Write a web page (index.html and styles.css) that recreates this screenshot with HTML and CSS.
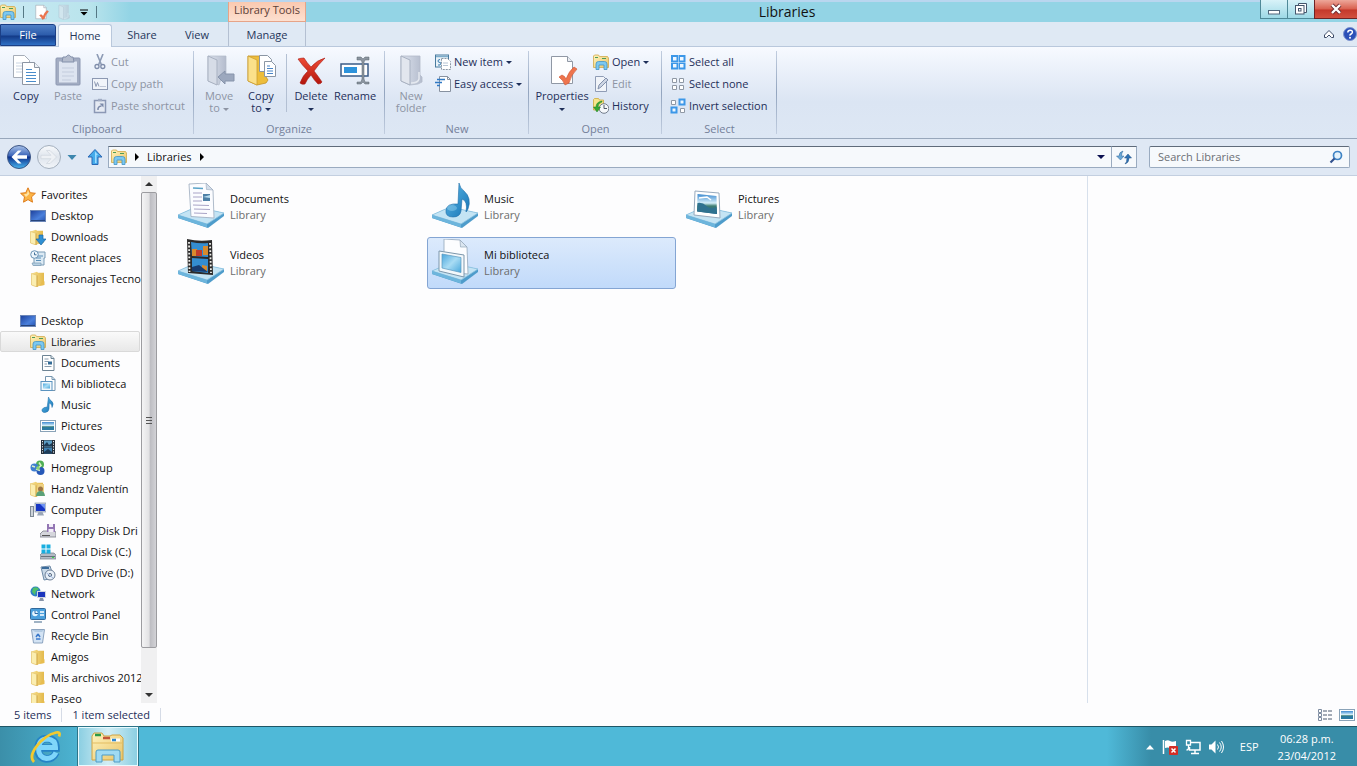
FILE: index.html
```html
<!DOCTYPE html>
<html lang="en">
<head>
<meta charset="utf-8">
<title>Libraries</title>
<link rel="stylesheet" href="styles.css">
</head>
<body>
<svg class="sprite" aria-hidden="true">
  <defs>
    <linearGradient id="gold" x1="0" y1="0" x2="1" y2="0"><stop offset="0" stop-color="#f7e08e"/><stop offset="1" stop-color="#e3b94c"/></linearGradient>
    <linearGradient id="cream" x1="0" y1="0" x2="1" y2="1"><stop offset="0" stop-color="#fff3bd"/><stop offset="1" stop-color="#e9c468"/></linearGradient>
    <linearGradient id="grey" x1="0" y1="0" x2="1" y2="0"><stop offset="0" stop-color="#dde3ee"/><stop offset="1" stop-color="#b4bccd"/></linearGradient>
    <linearGradient id="sky" x1="0" y1="0" x2="1" y2="1"><stop offset="0" stop-color="#4aa6dc"/><stop offset=".5" stop-color="#a9dcf4"/><stop offset="1" stop-color="#4aa8dc"/></linearGradient>
    <linearGradient id="screen" x1="0" y1="0" x2="1" y2="1"><stop offset="0" stop-color="#1c3f9a"/><stop offset=".6" stop-color="#4a80dc"/><stop offset="1" stop-color="#2450ae"/></linearGradient>
    <linearGradient id="note" x1="0" y1="0" x2="1" y2="1"><stop offset="0" stop-color="#5fbbe8"/><stop offset="1" stop-color="#1673b5"/></linearGradient>
    <linearGradient id="orb" x1="0" y1="0" x2="0" y2="1"><stop offset="0" stop-color="#a9c3ea"/><stop offset=".45" stop-color="#3a63b8"/><stop offset=".5" stop-color="#0c2f8c"/><stop offset="1" stop-color="#49b7f0"/></linearGradient>
    <linearGradient id="orboff" x1="0" y1="0" x2="0" y2="1"><stop offset="0" stop-color="#f8fafc"/><stop offset=".5" stop-color="#dfe5ed"/><stop offset="1" stop-color="#f2f5f9"/></linearGradient>
    <linearGradient id="scene" x1="0" y1="0" x2="0" y2="1"><stop offset="0" stop-color="#3d8ad0"/><stop offset=".45" stop-color="#d5effa"/><stop offset=".6" stop-color="#3f7f74"/><stop offset="1" stop-color="#1f5c8c"/></linearGradient>
    <linearGradient id="red" x1="0" y1="0" x2="0" y2="1"><stop offset="0" stop-color="#ee4b35"/><stop offset="1" stop-color="#b3150d"/></linearGradient>

    <symbol id="folder" viewBox="0 0 16 16"><path d="M1.500 2.500L7 .8l1 1h6V14l-5 1-2 1-5.500-2z" fill="url(#gold)"/><path d="M1.500 2.500L7 4.300V16l-5.500-2z" fill="#fbeeb0" stroke="#e0c069" stroke-width=".6"/><path d="M7 4.500V16" stroke="#c79a35" stroke-width=".7"/><path d="M13 9.500l1.500 1v3.500l-5 .8" fill="#e8bd50"/></symbol>
    <symbol id="download" viewBox="0 0 16 16"><use href="#folder" x="-1"/><path d="M9 6h4v4h3l-5 6-5-6h3z" fill="#2f8fd3" stroke="#1b67a6" stroke-width=".7"/></symbol>
    <symbol id="libs" viewBox="0 0 16 16"><path d="M.5 2l1-1h4l1 1.500h8L15.500 4v9.500H.5z" fill="url(#cream)" stroke="#d1a94a" stroke-width=".8"/><path d="M2 3.500h3M9 4.500h4" stroke="#4c9c57"/><path d="M3 15.500V10q0-2.500 2.500-2.500h6Q14 7.500 14 10v5.500h-3V11H6v4.500z" fill="#7cc8f0" stroke="#4394c6" stroke-width=".8"/></symbol>
    <symbol id="star" viewBox="0 0 16 16"><path d="M8 .8l2.200 4.900 5.200.6-3.900 3.600 1 5.300L8 12.600l-4.500 2.600 1-5.300L.6 6.300l5.200-.6z" fill="#fbb445" stroke="#de7c1c"/><path d="M8 3l1.300 4L6 10 4 7.200l3-.5z" fill="#fff0c0" opacity=".8"/></symbol>
    <symbol id="desk" viewBox="0 0 16 16"><rect x=".5" y="2.500" width="15" height="11" fill="url(#screen)" stroke="#6b86b8"/><path d="M1 12.500h14" stroke="#26447c"/></symbol>
    <symbol id="recent" viewBox="0 0 16 16"><path d="M4 2h11v6h-1v7H4z" fill="#dceaf4" stroke="#7a9bb5"/><path d="M6 8h5M6 10.500h5M8 6h5" stroke="#5a8fb8"/><path d="M2 13h9v2.500H3z" fill="#b7d0e2" stroke="#7a9bb5" stroke-width=".7"/><circle cx="4.500" cy="4.500" r="3.800" fill="#eef6fc" stroke="#6a93b5"/><path d="M4.500 2.500v2.300H6.500" fill="none" stroke="#3e6d94"/></symbol>
    <symbol id="doc" viewBox="0 0 16 16"><path d="M2.500.5H11l3 3v12H2.500z" fill="#fff" stroke="#6e8494"/><path d="M11 .5v3h3" fill="#dbe4ec" stroke="#6e8494"/><path d="M4.500 4h4M4.500 6.500h4M4.500 9h2.500M4.500 11.500h7" stroke="#8a9dae"/><rect x="8" y="6.500" width="4" height="3" fill="#336b96"/></symbol>
    <symbol id="mylib" viewBox="0 0 16 16"><path d="M5.500.5H12l3 3v11H5.500z" fill="#fff" stroke="#7595af"/><path d="M12 .5v3h3" fill="none" stroke="#7595af"/><rect x="1" y="5.500" width="11" height="9" fill="#f2f8fc" stroke="#5b93bf"/><rect x="3" y="7.500" width="7" height="5" fill="url(#sky)"/></symbol>
    <symbol id="music" viewBox="0 0 16 16"><path d="M8.500 0q.5 2.500 3 4 3 2.500.5 6.500.3-3.500-2.800-4.500l-.2 6q-.3 3-3.800 3.500-3.700 0-3.200-2.800Q3 10 7.200 10z" fill="url(#note)" stroke="#1c6ca8" stroke-width=".5"/></symbol>
    <symbol id="pic" viewBox="0 0 16 16"><rect x=".5" y="2.500" width="15" height="11" fill="#fff" stroke="#8aa3b8"/><rect x="2" y="4" width="12" height="8" fill="url(#scene)"/><path d="M2 10q3-1.500 6-1t6-.5V12H2z" fill="#2b7ba2"/></symbol>
    <symbol id="video" viewBox="0 0 16 16"><rect x="1" y="1" width="14" height="14" fill="#26303c"/><rect x="4" y="1.500" width="8" height="6" fill="#5d9dc4"/><rect x="4" y="8.500" width="8" height="6" fill="#3d7fb0"/><path d="M4 6l3-3 2 3 3-2v3H4zM4 13l4-3 4 3v1.500H4z" fill="#1d3b57"/><path d="M2.500 2v12M13.500 2v12" stroke="#e5edf3" stroke-dasharray="1.200 1.400"/></symbol>
    <symbol id="home" viewBox="0 0 16 16"><circle cx="10" cy="4.500" r="4" fill="#4fae55"/><circle cx="4.500" cy="7.500" r="4" fill="#3f7ed0"/><circle cx="10.500" cy="11" r="4" fill="#2658b8"/><path d="M9 2.500l2 3-4 4 3 1M2 6l3 1" stroke="#d8f0c8" stroke-width="1.500" fill="none"/><circle cx="8" cy="8" r="1.800" fill="#8cd472"/></symbol>
    <symbol id="user" viewBox="0 0 16 16"><use href="#folder" x="-1"/><path d="M8 3h6v12H7V8z" fill="#efd182"/><circle cx="10.500" cy="8" r="2.500" fill="#9c7445"/><path d="M6 15q.5-5 4.500-5t4.500 5z" fill="#5ba178"/></symbol>
    <symbol id="pc" viewBox="0 0 16 16"><rect x=".5" y="4.500" width="3" height="10" fill="#cdd3da" stroke="#7f8a96"/><rect x="5" y="1" width="11" height="9" fill="#ccd4e0" stroke="#7585a0" stroke-width=".6"/><rect x="6" y="2" width="9" height="7" fill="#1736c4"/><path d="M10 2h5v5z" fill="#6f93f3"/><path d="M8.500 10h4l1.500 3.500H7z" fill="#9aa6b8"/></symbol>
    <symbol id="floppy" viewBox="0 0 16 16"><path d="M3 8h12l1 2v4H0v-3z" fill="#d5d6dc" stroke="#7a7c88" stroke-width=".8"/><path d="M7 1h8v8H7z" fill="#9376b4"/><path d="M9 1h4v3H9zM8.500 6h5v3h-5z" fill="#f3eef8"/><path d="M2 12.500h8" stroke="#555"/></symbol>
    <symbol id="disk" viewBox="0 0 16 16"><path d="M2 9h12l2 2v4H0v-4z" fill="#b3bac4" stroke="#747e8a" stroke-width=".7"/><path d="M1 12.500h14" stroke="#69727d"/><path d="M12 13.500h2" stroke="#3bdc4b"/><path d="M1.500.5h4v4h-4zM6.500.5h4v4h-4zM1.500 5.500h4v4h-4zM6.500 5.500h4v4h-4z" fill="#19aee0"/></symbol>
    <symbol id="dvd" viewBox="0 0 16 16"><path d="M1 2l9-1 4 12-10 2z" fill="#c8d8e7" stroke="#6f8ba8"/><path d="M2 3h7" stroke="#3a6b9b" stroke-width="2"/><circle cx="10" cy="10" r="5" fill="#e8f0f8" stroke="#6e7f96"/><circle cx="10" cy="10" r="1.500" fill="#fff" stroke="#52657c"/><path d="M6.500 8L13 13" stroke="#9fb6e0"/></symbol>
    <symbol id="net" viewBox="0 0 16 16"><circle cx="5.500" cy="5.500" r="5" fill="#2c7fc4"/><path d="M3 2q4-2 6 1L6 5 5 9 2 6z" fill="#4fc06a"/><rect x="7" y="5" width="9" height="7" fill="#d0d6e0"/><rect x="8" y="6" width="7" height="5" fill="#1b35bd"/><path d="M10 12h3l1 3H9z" fill="#8894a8"/></symbol>
    <symbol id="panel" viewBox="0 0 16 16"><rect x=".5" y="1.500" width="15" height="11" rx="1" fill="#4a9fdc" stroke="#32699b"/><circle cx="5" cy="6.500" r="2.800" fill="#e8f7ff"/><path d="M5 6.500V3.500M5 6.500h3" stroke="#2a69a8"/><path d="M10 5h4M10 8h4" stroke="#fff" stroke-width="1.500"/><path d="M4 15h8" stroke="#9fb2c4" stroke-width="2"/></symbol>
    <symbol id="bin" viewBox="0 0 16 16"><path d="M1.500 1.500h13L12.500 15h-9z" fill="#d3e3f4" stroke="#8ba3bf"/><path d="M2 2l3 2h7l2-2" fill="#b3cbe3"/><path d="M8 6l2 3M6 9l2-3M6 11h4.500" stroke="#3b79cb" stroke-width="1.500"/></symbol>

    <symbol id="copy" viewBox="0 0 32 32"><path d="M3.500 1.500h11l5 5v17h-16z" fill="#fff" stroke="#a6adb8"/><path d="M6 9h9M6 12h9M6 15h9M6 18h9" stroke="#c9d4e2"/><path d="M12.500 8.500h12l5 5v17h-17z" fill="#fff" stroke="#8d96a4"/><path d="M24.500 8.500v5h5" fill="#edf1f6" stroke="#8d96a4"/><path d="M16 15.500h6M16 18.500h10M16 21.500h10M16 24.500h10M16 27.500h10" stroke="#4a8ccb"/></symbol>
    <symbol id="paste" viewBox="0 0 32 32"><rect x="4" y="4" width="24" height="27" rx="1" fill="#a2acc2" stroke="#8d98b2"/><rect x="7" y="7.500" width="18" height="21" fill="#dde4f0"/><path d="M10 14h12M10 18h12M10 22h12M10 26h9" stroke="#c3ccdd"/><path d="M11 3h3q2.500-4 5 0h2l1 5H10z" fill="#b4bccd" stroke="#8390aa"/></symbol>
    <symbol id="cut" viewBox="0 0 16 16"><path d="M5 0l4.500 11M11 0L6.500 11" stroke="#8d9bb5" stroke-width="1.600"/><circle cx="5" cy="12.500" r="2" fill="none" stroke="#7f8dab" stroke-width="1.300"/><circle cx="10.800" cy="12.500" r="2" fill="none" stroke="#7f8dab" stroke-width="1.300"/></symbol>
    <symbol id="path" viewBox="0 0 16 16"><rect x=".5" y="2.500" width="15" height="11" fill="#f1f4fa" stroke="#8c98b2"/><path d="M2.500 5.500l1.500 5 1.500-4 1.500 4" fill="none" stroke="#8c98b2"/><path d="M8.500 10.500h1M10.500 10.500h1M12.500 10.500h1" stroke="#8c98b2"/></symbol>
    <symbol id="shortcut" viewBox="0 0 16 16"><rect x="2.500" y="2.500" width="11" height="12" fill="#e5eaf3" stroke="#8b98b5" stroke-width="1.500"/><path d="M6 .8h4v2.400H6z" fill="#a0abc3"/><path d="M6 12q-.5-3.500 3.500-4" fill="none" stroke="#7b89a9" stroke-width="1.500"/><path d="M7.500 5.500h4v4z" fill="#7b89a9"/></symbol>
    <symbol id="moveto" viewBox="0 0 32 32"><path d="M5 2h18v20l-5 3-2 6-11-4z" fill="url(#grey)" stroke="#b2bac9" stroke-width=".7"/><path d="M5 2l9 4v25l-9-4z" fill="#d6dce7" stroke="#a8b1c1"/><path d="M15 23l7-6v3h9v7h-9v3z" fill="#9ca8be" stroke="#8794ab"/></symbol>
    <symbol id="copyto" viewBox="0 0 32 32"><path d="M3 2h15v6l3 15 2 3-2 3-9 2-9-4z" fill="#edbd3b" stroke="#c39226" stroke-width=".8"/><path d="M3 2l9 4v25l-9-4z" fill="#fbe08a" stroke="#cc9e31" stroke-width=".8"/><path d="M14.500 1.500h8l4 4v12h-12z" fill="#fff" stroke="#8b96a4"/><path d="M19.500 7.500h7l4 4v11h-11z" fill="#fff" stroke="#8b96a4"/><path d="M22 12h3M22 14.500h6M22 17h6M22 19.500h6" stroke="#4a85c8"/></symbol>
    <symbol id="delete" viewBox="0 0 32 32"><path d="M3 5q3-1 6-1 3 5 7 9Q22 6 30 4 23 11 19 17q4 5 8 11-1 2-4 2-4-4-7-9-4 4-6 9-3 1-5-1 3-8 8-12Q7 11 3 5z" fill="url(#red)" stroke="#a51b16" stroke-width=".6"/></symbol>
    <symbol id="rename" viewBox="0 0 32 32"><rect x="2" y="10" width="27" height="12" fill="#fff" stroke="#3b5c88" stroke-width="1.500"/><rect x="5" y="13" width="13" height="6" fill="#2d93dc"/><path d="M18 3h4l2 2 2-2h4v3h-4l-1 2v17l1 3h4v2h-4l-2-2-2 2h-4v-2h4l1-3V8l-1-2h-4z" fill="#8c95a0" stroke="#59646f" stroke-width=".5"/></symbol>
    <symbol id="newfolder" viewBox="0 0 32 32"><path d="M6 2h19v19l2 2v5l-4 2-8 1-9-4z" fill="url(#grey)" stroke="#b2bac9" stroke-width=".8"/><path d="M6 2l9 4v25l-9-4z" fill="#e2e6ee" stroke="#a8b1c1"/><path d="M24 18v7q-1 4-8 4" fill="none" stroke="#e5e9f0" stroke-width="1.500"/></symbol>
    <symbol id="newitem" viewBox="0 0 16 16"><rect x=".5" y="1" width="13" height="12" fill="#e9f2f8" stroke="#497b9e"/><path d="M1 2.500h12" stroke="#7eaccb" stroke-width="1.500"/><path d="M5 5.500q-2 0-2 1.500t2 1.500 0 2.500H3" fill="none" stroke="#3a7db0"/><path d="M6.500 4.500h6l3 3v8h-9z" fill="#fff" stroke="#8b96a4" stroke-dasharray="2 1"/><path d="M8 9h5M8 11.500h5" stroke="#b6c4d4"/></symbol>
    <symbol id="easy" viewBox="0 0 16 16"><path d="M4.500.5h8l3 3v12h-11z" fill="#fff" stroke="#8791a0"/><path d="M12.500.5v3h3" fill="none" stroke="#8791a0"/><path d="M2 3.500h8M0 6.500h7M2 9.500h3" stroke="#2f78c4" stroke-width="1.500"/></symbol>
    <symbol id="props" viewBox="0 0 32 32"><path d="M5.500 2.500h16l5 5v22h-21z" fill="#fff" stroke="#9098a5"/><path d="M21.500 2.500v5h5" fill="#e9edf3" stroke="#9098a5"/><path d="M13 23l3-2q3 1 4 4 3-8 8-12l3 2q-6 6-8 14l-4 2q-2-5-6-8z" fill="#ee744d" stroke="#cd5330" stroke-width=".6"/></symbol>
    <symbol id="edit" viewBox="0 0 16 16"><path d="M2.500.5h8l3 3v12h-11z" fill="#f1f4f9" stroke="#8f9cb5"/><path d="M5 13l1-4 7-7 2 2-7 7z" fill="#cdd5e3" stroke="#8391ac"/></symbol>
    <symbol id="history" viewBox="0 0 16 16"><path d="M.5 1.500l1-1h4l1 1.500h4V12H.5z" fill="#f6e48b" stroke="#cda93c" stroke-width=".8"/><circle cx="11" cy="10.500" r="4.800" fill="#f5f8fb" stroke="#717c8b"/><path d="M11 7v3.500h3" stroke="#505a68" fill="none"/><path d="M9 4q-4 1-4 5H7.500L4 14 .5 9H3q0-5 6-6z" fill="#33a833" stroke="#1e7c24" stroke-width=".5"/></symbol>
    <symbol id="selall" viewBox="0 0 16 16"><path d="M1 1h7v7H1zM8.500 1h7v7h-7zM1 8.500h7v7H1zM8.500 8.500h7v7h-7z" fill="#3c97e8"/><path d="M3 3h3.500v3.500H3zM10 3h3.500v3.500H10zM3 10h3.500v3.500H3zM10 10h3.500v3.500H10z" fill="#eef7ff"/></symbol>
    <symbol id="selnone" viewBox="0 0 16 16"><path d="M2.500 2.500h4v4h-4zM9.500 2.500h4v4h-4zM2.500 9.500h4v4h-4zM9.500 9.500h4v4h-4z" fill="#fff" stroke="#8f98a5"/></symbol>
    <symbol id="selinv" viewBox="0 0 16 16"><path d="M1.500 2.500h4v4h-4zM10.500 10.500h4v4h-4z" fill="#fff" stroke="#8f98a5"/><path d="M9.500 1.500h5v5h-5zM1.500 9.500h5v5h-5z" fill="#eef7ff" stroke="#3c97e8" stroke-width="2"/></symbol>

    <symbol id="base" viewBox="0 0 48 48"><path d="M1 32l18-8 28 6v3L31 45 1 35z" fill="#4e9ccb"/><path d="M1 32l18-8 28 6-17 11z" fill="#c4e4f4" stroke="#8cc1df" stroke-width=".8"/><path d="M1 32v3l29 9.500V41z" fill="#6db5dc"/></symbol>
    <symbol id="bigdoc" viewBox="0 0 48 48"><use href="#base"/><path d="M12 1l17-1 7 7 1 28-23-1.500z" fill="#fbfcff" stroke="#9aa9bd" stroke-width=".8"/><path d="M29 0l.5 6.500L36 7z" fill="#d4deea" stroke="#9aa9bd" stroke-width=".6"/><path d="M16 5l10 .5" stroke="#59a3c8" stroke-width="1.500"/><path d="M16 10h9M16 14h9M16 18h9M16 22l16 .5M17 26l16 .5M17 30l13 .5" stroke="#a9a4c7"/><path d="M26 11h7v7h-7z" fill="#4d7fa6"/><path d="M26 14l7-2v3z" fill="#b7dcf0"/></symbol>
    <symbol id="bigmusic" viewBox="0 0 48 48"><use href="#base"/><path d="M28 0q1 5 5 8 8 7 4 18-1 2-2 3 2-11-4-13l-1 12q-1 6-8 6-8 0-7-7 1-7 12-6z" fill="url(#note)" stroke="#1c6ca8" stroke-width=".6"/><ellipse cx="21" cy="25" rx="5" ry="3" fill="#a5dcf6" opacity=".4"/></symbol>
    <symbol id="bigpic" viewBox="0 0 48 48"><use href="#base"/><path d="M10 8l24 2 1 25-26-3z" fill="#fff" stroke="#98aabd"/><path d="M12.500 11l19 2 .5 18-20-2.500z" fill="url(#scene)"/><path d="M12.500 20q5-1 9 3t10 1v7l-19-2.500z" fill="#2f7290"/><path d="M14 15l8-1 4 3" stroke="#fff" fill="none" stroke-width="1.500"/></symbol>
    <symbol id="bigvideo" viewBox="0 0 48 48"><use href="#base"/><path d="M10 0q12 3 25 1l1 35-25-2z" fill="#2b2a2b"/><path d="M14 3q9 2 17 1v14l-16-1zM15 19l16 1v14l-16-2z" fill="#348dd0"/><path d="M15 10h5v7h-5zM26 7h5v9h-5zM25 26l5 1v5h-5z" fill="#d78a2e"/><path d="M19 11h6v6h-6z" fill="#bf3c2d"/><path d="M15 28l7-2 9 7-16-1z" fill="#183c70"/><path d="M12 3l.5 30M33 4l1 30" stroke="#f0f0ec" stroke-width="1.800" stroke-dasharray="1.800 1.800"/></symbol>
    <symbol id="bigmy" viewBox="0 0 48 48"><use href="#base"/><path d="M13 0l16 1 7 7 1 27-24-2z" fill="#fcfdff" stroke="#93a6b9" stroke-width=".8"/><path d="M29 1l.5 7H36z" fill="#dbe6f0" stroke="#93a6b9" stroke-width=".7"/><path d="M8 12l25 4v22L8 32z" fill="#f3f8fb" stroke="#7c97ac"/><path d="M11 15l19 3.500v15L11 29z" fill="url(#sky)" stroke="#5a98be" stroke-width=".7"/></symbol>
  </defs>
</svg>

<div class="window">
  <header class="titlebar">
    <div class="qat">
      <svg class="i16"><use href="#libs"/></svg>
      <span class="tick"></span>
      <button class="bare" aria-label="Properties"><svg class="i16"><use href="#props"/></svg></button>
      <button class="bare" aria-label="New folder"><svg class="i16 faded"><use href="#newfolder"/></svg></button>
      <button class="bare" aria-label="Customize toolbar"><svg class="i10" viewBox="0 0 10 10"><path d="M1 3h8" stroke="#000"/><path d="M1.500 5h7L5 8.500z"/></svg></button>
      <span class="tick"></span>
    </div>
    <div class="context">Library Tools</div>
    <h1 class="title">Libraries</h1>
    <div class="controls">
      <button class="ctl" aria-label="Minimize"><svg viewBox="0 0 14 14"><rect x="1.500" y="8.500" width="11" height="3.500" fill="#fff" stroke="#51677c"/></svg></button>
      <button class="ctl" aria-label="Restore"><svg viewBox="0 0 14 14"><path d="M4.500 1.500h8v9h-8z" fill="#fff" stroke="#44566c"/><rect x="1.500" y="3.500" width="8.500" height="8.500" fill="#fff" stroke="#44566c"/><rect x="4.500" y="6.500" width="2.500" height="2.500" fill="#fff" stroke="#44566c"/></svg></button>
      <button class="ctl close" aria-label="Close"><svg viewBox="0 0 14 14"><path d="M3 3l8 8M11 3l-8 8" stroke="#6a2b30" stroke-width="4"/><path d="M3 3l8 8M11 3l-8 8" stroke="#fff" stroke-width="2.400"/></svg></button>
    </div>
  </header>

  <nav class="tabs" aria-label="Ribbon tabs">
    <button class="tab file">File</button>
    <button class="tab active">Home</button>
    <button class="tab">Share</button>
    <button class="tab">View</button>
    <button class="tab manage">Manage</button>
    <div class="tabs-end">
      <button class="bare" aria-label="Collapse ribbon"><svg class="i12" viewBox="0 0 12 12"><path d="M1.500 7L6 2.500 10.500 7v2.500h-2L6 7 3.500 9.500h-2z" fill="#fff" stroke="#3c4a66"/></svg></button>
      <button class="bare" aria-label="Help"><svg class="i14" viewBox="0 0 14 14"><circle cx="7" cy="7" r="6.500" fill="#2c50b8" stroke="#7d93cf"/><path d="M4.800 5.500q0-2.300 2.400-2.300t2.200 2.100q0 1-1.300 1.700T7 8.700" fill="none" stroke="#fff" stroke-width="1.500"/><circle cx="7" cy="10.700" r="1" fill="#fff"/></svg></button>
    </div>
  </nav>

  <section class="ribbon">
    <div class="group clipboard">
      <div class="tools">
        <button class="big"><svg class="i32"><use href="#copy"/></svg><span>Copy</span></button>
        <button class="big off"><svg class="i32"><use href="#paste"/></svg><span>Paste</span></button>
        <div class="stack">
          <button class="small off"><svg class="i16"><use href="#cut"/></svg>Cut</button>
          <button class="small off"><svg class="i16"><use href="#path"/></svg>Copy path</button>
          <button class="small off"><svg class="i16"><use href="#shortcut"/></svg>Paste shortcut</button>
        </div>
      </div>
      <div class="caption">Clipboard</div>
    </div>
    <div class="group organize">
      <div class="tools">
        <button class="big off"><svg class="i32"><use href="#moveto"/></svg><span>Move</span><span>to <i class="caret"></i></span></button>
        <button class="big"><svg class="i32"><use href="#copyto"/></svg><span>Copy</span><span>to <i class="caret"></i></span></button>
        <span class="split"></span>
        <button class="big"><svg class="i32"><use href="#delete"/></svg><span>Delete</span><span><i class="caret"></i></span></button>
        <button class="big wide"><svg class="i32"><use href="#rename"/></svg><span>Rename</span></button>
      </div>
      <div class="caption">Organize</div>
    </div>
    <div class="group new">
      <div class="tools">
        <button class="big off"><svg class="i32"><use href="#newfolder"/></svg><span>New</span><span>folder</span></button>
        <div class="stack">
          <button class="small"><svg class="i16"><use href="#newitem"/></svg>New item <i class="caret"></i></button>
          <button class="small"><svg class="i16"><use href="#easy"/></svg>Easy access <i class="caret"></i></button>
        </div>
      </div>
      <div class="caption">New</div>
    </div>
    <div class="group open">
      <div class="tools">
        <button class="big widest"><svg class="i32"><use href="#props"/></svg><span>Properties</span><span><i class="caret"></i></span></button>
        <div class="stack">
          <button class="small"><svg class="i16"><use href="#libs"/></svg>Open <i class="caret"></i></button>
          <button class="small off"><svg class="i16"><use href="#edit"/></svg>Edit</button>
          <button class="small"><svg class="i16"><use href="#history"/></svg>History</button>
        </div>
      </div>
      <div class="caption">Open</div>
    </div>
    <div class="group select">
      <div class="tools">
        <div class="stack">
          <button class="small"><svg class="i16"><use href="#selall"/></svg>Select all</button>
          <button class="small"><svg class="i16"><use href="#selnone"/></svg>Select none</button>
          <button class="small"><svg class="i16"><use href="#selinv"/></svg>Invert selection</button>
        </div>
      </div>
      <div class="caption">Select</div>
    </div>
  </section>

  <div class="location">
    <button class="bare" aria-label="Back"><svg class="i26" viewBox="0 0 26 26"><circle cx="13" cy="13" r="11.500" fill="url(#orb)" stroke="#3c5584"/><path d="M5.500 13L12 6.500h3.500L11 11.300h10v3.400H11l4.500 4.800H12z" fill="#fff"/></svg></button>
    <button class="bare fwd" aria-label="Forward" disabled><svg class="i26" viewBox="0 0 26 26"><circle cx="13" cy="13" r="11.500" fill="url(#orboff)" stroke="#a3afbd"/><path d="M20.500 13L14 6.500h-3.500l4.500 4.800H5v3.400h10l-4.500 4.800H14z" fill="#eef1f5" stroke="#d0d6de" stroke-width=".7"/></svg></button>
    <button class="bare recents" aria-label="Recent locations"><svg class="i10" viewBox="0 0 10 10"><path d="M.5 3h9L5 8z" fill="#3d86ad"/></svg></button>
    <button class="bare up" aria-label="Up"><svg class="i16" viewBox="0 0 16 16"><path d="M8 .5L15 8h-4v7.500H5V8H1z" fill="#45abea" stroke="#2a67b4"/><path d="M8 2.500l3 3.500H9.500v8H8z" fill="#9edcff"/></svg></button>
    <div class="address">
      <svg class="i16"><use href="#libs"/></svg>
      <svg class="i8" viewBox="0 0 8 8"><path d="M2 0l4 4-4 4z"/></svg>
      <a class="crumb" href="#libraries">Libraries</a>
      <svg class="i8" viewBox="0 0 8 8"><path d="M2 0l4 4-4 4z"/></svg>
      <button class="bare drop" aria-label="Previous locations"><svg class="i8" viewBox="0 0 8 8"><path d="M0 2h8L4 6z" fill="#0b1050"/></svg></button>
    </div>
    <button class="refresh" aria-label="Refresh"><svg class="i16" viewBox="0 0 16 16"><path d="M7 2Q3 3 3 7H.5L4.500 11 8 7H5.500Q5.500 4 7 2z" fill="#6ba8d6" stroke="#2d6499" stroke-width=".5"/><path d="M9 15q4-1 4-6h2.500L12 5 8.500 9H11q0 4-2 6z" fill="#2f73b4" stroke="#1f4f85" stroke-width=".5"/></svg></button>
    <div class="search">
      <input type="search" aria-label="Search Libraries" placeholder="Search Libraries">
      <svg class="i14" viewBox="0 0 14 14"><circle cx="8.500" cy="5.500" r="4" fill="#e4f2fb" stroke="#3e83c4" stroke-width="1.700"/><path d="M5.500 8.500L1.500 12.500" stroke="#31508e" stroke-width="2.200"/></svg>
    </div>
  </div>

  <main class="content">
    <nav class="tree" aria-label="Folders">
      <a class="node l0" href="#fav"><svg class="i16"><use href="#star"/></svg>Favorites</a>
      <a class="node l1" href="#fdesk"><svg class="i16"><use href="#desk"/></svg>Desktop</a>
      <a class="node l1" href="#down"><svg class="i16"><use href="#download"/></svg>Downloads</a>
      <a class="node l1" href="#rec"><svg class="i16"><use href="#recent"/></svg>Recent places</a>
      <a class="node l1" href="#pers"><svg class="i16"><use href="#folder"/></svg>Personajes Tecno</a>
      <a class="node l0 section" href="#desktop"><svg class="i16"><use href="#desk"/></svg>Desktop</a>
      <a class="node l1 current" href="#libraries"><svg class="i16"><use href="#libs"/></svg>Libraries</a>
      <a class="node l2" href="#docs"><svg class="i16"><use href="#doc"/></svg>Documents</a>
      <a class="node l2" href="#mi"><svg class="i16"><use href="#mylib"/></svg>Mi biblioteca</a>
      <a class="node l2" href="#mus"><svg class="i16"><use href="#music"/></svg>Music</a>
      <a class="node l2" href="#pics"><svg class="i16"><use href="#pic"/></svg>Pictures</a>
      <a class="node l2" href="#vids"><svg class="i16"><use href="#video"/></svg>Videos</a>
      <a class="node l1" href="#hg"><svg class="i16"><use href="#home"/></svg>Homegroup</a>
      <a class="node l1" href="#handz"><svg class="i16"><use href="#user"/></svg>Handz Valentín</a>
      <a class="node l1" href="#comp"><svg class="i16"><use href="#pc"/></svg>Computer</a>
      <a class="node l2" href="#fd"><svg class="i16"><use href="#floppy"/></svg>Floppy Disk Dri</a>
      <a class="node l2" href="#c"><svg class="i16"><use href="#disk"/></svg>Local Disk (C:)</a>
      <a class="node l2" href="#d"><svg class="i16"><use href="#dvd"/></svg>DVD Drive (D:)</a>
      <a class="node l1" href="#nw"><svg class="i16"><use href="#net"/></svg>Network</a>
      <a class="node l1" href="#cp"><svg class="i16"><use href="#panel"/></svg>Control Panel</a>
      <a class="node l1" href="#rb"><svg class="i16"><use href="#bin"/></svg>Recycle Bin</a>
      <a class="node l1" href="#am"><svg class="i16"><use href="#folder"/></svg>Amigos</a>
      <a class="node l1" href="#mis"><svg class="i16"><use href="#folder"/></svg>Mis archivos 2012</a>
      <a class="node l1" href="#pas"><svg class="i16"><use href="#folder"/></svg>Paseo</a>
    </nav>
    <div class="scroll" aria-hidden="true">
      <svg class="arrow" viewBox="0 0 16 16"><path d="M4 10l4-4 4 4z" fill="#333"/></svg>
      <div class="thumb"><span></span><span></span><span></span></div>
      <div class="track"></div>
      <svg class="arrow" viewBox="0 0 16 16"><path d="M4 6l4 4 4-4z" fill="#333"/></svg>
    </div>
    <div class="files">
      <a class="item" href="#docs"><svg class="i48"><use href="#bigdoc"/></svg><span class="name">Documents<small>Library</small></span></a>
      <a class="item" href="#mus"><svg class="i48"><use href="#bigmusic"/></svg><span class="name">Music<small>Library</small></span></a>
      <a class="item" href="#pics"><svg class="i48"><use href="#bigpic"/></svg><span class="name">Pictures<small>Library</small></span></a>
      <a class="item" href="#vids"><svg class="i48"><use href="#bigvideo"/></svg><span class="name">Videos<small>Library</small></span></a>
      <a class="item selected" href="#mi"><svg class="i48"><use href="#bigmy"/></svg><span class="name">Mi biblioteca<small>Library</small></span></a>
    </div>
    <aside class="preview"></aside>
  </main>

  <footer class="status">
    <span class="cell">5 items</span>
    <span class="cell">1 item selected</span>
    <div class="views">
      <button class="bare" aria-label="Details view"><svg class="i16" viewBox="0 0 16 16"><path d="M1.500 2.500h3v3h-3zM1.500 6.500h3v3h-3zM1.500 10.500h3v3h-3z" fill="#fff" stroke="#7c8ba0"/><path d="M6 4h4M11 4h4M6 8h4M11 8h4M6 12h4M11 12h4" stroke="#4c5a70"/></svg></button>
      <button class="bare" aria-label="Large icons view"><svg class="i16"><use href="#pic"/></svg></button>
    </div>
  </footer>
</div>

<footer class="taskbar">
  <button class="app" aria-label="Internet Explorer"><svg class="i36" viewBox="0 0 36 36"><path d="M28 23.500Q25 30 18.500 30 10 29 10 19.500 10.500 9.500 19 9.500 28 10 28 19H13" fill="none" stroke="#2583c6" stroke-width="7.500"/><path d="M28 23.500Q25 29.500 18.500 29.500 10.500 28.500 10.500 19.500 11 10 19 10 27.500 10.500 27.500 18.500H13" fill="none" stroke="#7fd6fa" stroke-width="5"/><path d="M6 33Q1 28 8 18 17 6 28 3.500q5-1 3 4" fill="none" stroke="#f3c92e" stroke-width="2.800"/></svg></button>
  <button class="app running" aria-label="File Explorer"><svg class="i36" viewBox="0 0 36 36"><path d="M2 7l2-3h8l2 3h6l2-1h8l3 3v22H2z" fill="url(#cream)" stroke="#cfa243"/><path d="M5 6h6" stroke="#2c9b49" stroke-width="2.500"/><path d="M13 9h7" stroke="#c2553b" stroke-width="2.500"/><path d="M21 11h9" stroke="#fff" stroke-width="3"/><path d="M22 11h4" stroke="#2e87cf" stroke-width="2.500"/><path d="M2 14h31" stroke="#e3bd63"/><path d="M6 33V23q0-2 2-2h20q2 0 2 2v10h-6v-7H12v7z" fill="#9fdaf3" stroke="#4c9bc6"/></svg></button>
  <div class="tray">
    <svg class="i10" viewBox="0 0 10 10"><path d="M1 7.500h8L5 3z" fill="#fff"/></svg>
    <svg class="i16" viewBox="0 0 16 16"><path d="M1.500 1v14" stroke="#fff" stroke-width="1.500"/><path d="M3 2q3-1.500 5 0t6 0v7q-4 1-6 0t-5 0z" fill="#fff"/><rect x="7" y="7" width="9" height="9" rx="1" fill="#d22f27"/><path d="M9.500 9.500l4 4M13.500 9.500l-4 4" stroke="#fff" stroke-width="1.500"/></svg>
    <svg class="i16" viewBox="0 0 16 16"><path d="M6 3.500h9v7.500H4.500V8M10 11v3M6 14.500h8" fill="none" stroke="#fff" stroke-width="1.500"/><path d="M1.500 1.500h4V6h-4zM3.500 6v3q0 2-2 2" fill="none" stroke="#fff" stroke-width="1.300"/></svg>
    <svg class="i16" viewBox="0 0 16 16"><path d="M1 5.500h2.500L7.500 1.500v13l-4-4H1z" fill="#fff"/><path d="M9.500 5.500q2 2.500 0 5M11.500 3.500q3.500 4.500 0 9M13.500 2q4 6 0 12" fill="none" stroke="#fff"/></svg>
    <span class="lang">ESP</span>
    <time class="clock" datetime="2012-04-23T18:28">06:28 p.m.<br>23/04/2012</time>
  </div>
</footer>
</body>
</html>
```
FILE: styles.css
```css
* { box-sizing: border-box; }

body {
  margin: 0;
  height: 100vh;
  display: flex;
  flex-direction: column;
  overflow: hidden;
  font: 11px/16px "Open Sans", "Noto Sans", sans-serif;
  color: #1b1b1b;
  background: #fdfdfe;
}

button, input {
  margin: 0;
  padding: 0;
  border: 0;
  background: none;
  font: inherit;
  color: inherit;
}

a { color: inherit; text-decoration: none; }
svg { display: block; flex: none; }

.sprite { position: absolute; width: 0; height: 0; }
.bare { display: flex; align-items: center; justify-content: center; }
.faded { opacity: .55; }

.i8 { width: 8px; height: 8px; }
.i10 { width: 10px; height: 10px; }
.i12 { width: 12px; height: 12px; }
.i14 { width: 14px; height: 14px; }
.i16 { width: 16px; height: 16px; }
.i26 { width: 26px; height: 26px; }
.i32 { width: 32px; height: 32px; }
.i36 { width: 36px; height: 36px; }
.i48 { width: 48px; height: 48px; }

.caret {
  display: inline-block;
  vertical-align: middle;
  border: 3px solid transparent;
  border-top-color: currentColor;
  border-bottom: 0;
}

.window {
  flex: 1;
  min-height: 0;
  display: flex;
  flex-direction: column;
}

/* Title bar */
.titlebar {
  display: flex;
  height: 22px;
  border-top: 2px solid #b9d6ef;
  background: linear-gradient(90deg, #c9e9f3 0, #b9e4ec 90px, #93d4e5 130px);
}

.qat {
  width: 228px;
  display: flex;
  align-items: center;
  gap: 7px;
}

.tick { width: 1px; height: 12px; background: #557884; }
.tick + .bare { margin-left: 2px; }

.context {
  width: 78px;
  text-align: center;
  color: #5b4038;
  border: solid #e6a488;
  border-width: 0 1px 1px;
  background: linear-gradient(#fac9b0, #fde0d0);
}

.title {
  flex: 1;
  margin: 0;
  padding-left: 8px;
  text-align: center;
  font-size: 14px;
  font-weight: 400;
  line-height: 20px;
  color: #111;
}

.controls { display: flex; align-items: flex-start; margin-top: -2px; }

.ctl {
  width: 27px;
  height: 19px;
  display: flex;
  align-items: center;
  justify-content: center;
  border: solid #4f8998;
  border-width: 0 0 1px 1px;
  background: linear-gradient(#d8f2f8, #9dd9e6);
}

.ctl svg { width: 14px; height: 14px; }

.ctl.close {
  width: 43px;
  border-color: #6e2325;
  background: linear-gradient(#eda79a, #d9604f 50%, #c4382b 55%, #d2503f);
}

/* Tabs */
.tabs {
  display: flex;
  align-items: flex-end;
  height: 25px;
  background: #dfe9f4;
  border-bottom: 1px solid #b9c8dc;
  color: #26365a;
}

.tab { width: 54px; height: 22px; }

.tab.file {
  width: 56px;
  margin-right: 2px;
  color: #fff;
  border: 1px solid #1b3f86;
  border-radius: 0 3px 0 0;
  background: linear-gradient(#4f7fc6, #2c5cab 50%, #133a87 55%, #2f70c4);
}

.tab.active {
  height: 23px;
  margin-bottom: -1px;
  border: 1px solid #b9c8dc;
  border-bottom: 0;
  border-radius: 3px 3px 0 0;
  background: #fafcff;
}

.tab:nth-child(3) { width: 60px; }
.tab:nth-child(4) { width: 50px; }

.tab.manage {
  width: 78px;
  height: 24px;
  margin-left: 6px;
  padding-top: 2px;
  border: solid #b4c0d2;
  border-width: 0 1px;
}

.tabs-end {
  margin-left: auto;
  align-self: center;
  display: flex;
  gap: 8px;
}

/* Ribbon */
.ribbon {
  display: flex;
  padding: 4px 0 0;
  border-bottom: 1px solid #98a7bb;
  background: linear-gradient(#f7faff, #e6edf8 35%, #dbe5f3 60%, #dde7f4);
  color: #1e2f59;
}

.group {
  display: flex;
  flex-direction: column;
  padding-left: 5px;
  margin-bottom: 4px;
  border-style: solid;
  border-width: 0 1px 0 0;
  border-image: linear-gradient(#c2cee0, #93a5bf 50%, #c2cee0) 1;
}

.clipboard { width: 194px; }
.organize { width: 191px; padding-left: 4px; }
.new { width: 144px; }
.open { width: 133px; }
.select { width: 115px; }

.tools { display: flex; height: 69px; }

.big {
  width: 42px;
  padding-top: 3px;
  display: flex;
  flex-direction: column;
  align-items: center;
  line-height: 12px;
}

.big svg { margin-bottom: 4px; }
.wide { width: 46px; }
.widest { width: 56px; }
.off { color: #8d94a3; }

.split { width: 1px; margin: 3px 3px 8px 4px; background: #b3c0d3; }

.stack { padding-left: 3px; }

.small {
  display: flex;
  align-items: center;
  gap: 3px;
  height: 22px;
  white-space: nowrap;
}

.caption {
  margin: 0 0 -4px -4px;
  text-align: center;
  line-height: 18px;
  color: #74809a;
}

/* Location bar */
.location {
  display: flex;
  align-items: center;
  height: 37px;
  padding: 0 7px 0 6px;
  background: #dfe8f4;
  border-bottom: 1px solid #c3cfe0;
}

.fwd { margin-left: 4px; }
.recents { margin-left: 5px; }
.up { margin: 0 5px 0 10px; }

.address, .refresh, .search {
  height: 22px;
  display: flex;
  align-items: center;
  border: 1px solid #9aabc0;
  border-top-color: #5f6b7a;
  background: #f6f9fc;
}

.address { flex: 1; gap: 6px; padding: 0 6px 0 2px; color: #111; }
.drop { margin-left: auto; }
.refresh { width: 25px; margin: 0 12px 0 0; border-left: 0; justify-content: center; }

.search { width: 201px; padding: 0 6px 0 8px; border-radius: 2px; }
.search input { flex: 1; min-width: 0; outline: 0; color: #555; appearance: none; }
.search input::placeholder { color: #6c6f75; opacity: 1; }

/* Main area */
.content { flex: 1; min-height: 0; display: flex; }

.tree {
  width: 141px;
  padding-top: 8px;
  overflow: hidden;
  color: #111;
}

.node {
  display: flex;
  align-items: center;
  gap: 5px;
  height: 21px;
  white-space: nowrap;
}

.l0 { padding-left: 20px; }
.l1 { padding-left: 30px; }
.l2 { padding-left: 40px; }
.section { margin-top: 21px; }

.current {
  padding-left: 29px;
  margin-right: 1px;
  border: 1px solid #d9d9d9;
  border-radius: 2px;
  background: linear-gradient(#fafafa, #e8e8e8);
}

.scroll {
  width: 17px;
  margin-right: 1px;
  display: flex;
  flex-direction: column;
  background: #f0f0f1;
  border-right: 1px solid #fdfdfe;
}

.arrow { width: 16px; height: 16px; }
.track { flex: 39; }

.thumb {
  flex: 454;
  display: flex;
  flex-direction: column;
  align-items: center;
  justify-content: center;
  gap: 2px;
  border: 1px solid #9c9ca0;
  border-radius: 2px;
  background: linear-gradient(90deg, #f4f4f5, #e2e2e4 50%, #bebec3 60%, #d2d2d6);
}

.thumb span { width: 6px; height: 1px; background: #555; }

.files {
  flex: 1;
  display: grid;
  grid-template-columns: repeat(auto-fill, 249px);
  grid-auto-rows: 52px;
  gap: 4px 5px;
  padding: 5px 14px;
}

.item {
  display: flex;
  align-items: center;
  gap: 5px;
  padding: 0 3px;
  border: 1px solid transparent;
  border-radius: 3px;
}

.item.selected {
  border-color: #84a5d3;
  background: linear-gradient(#dceafc, #c1dafa);
}

.name { color: #111; }
.name small { display: block; font-size: 11px; color: #6d6d6d; }

.preview { width: 270px; border-left: 1px solid #d7e0ec; }

/* Status bar */
.status {
  display: flex;
  align-items: center;
  height: 23px;
  padding: 0 2px 0 4px;
  color: #1e2f59;
}

.cell { padding: 0 10px; line-height: 14px; border-right: 1px solid #d5dbe6; }
.views { margin-left: auto; display: flex; gap: 6px; }

/* Taskbar */
.taskbar {
  display: flex;
  height: 40px;
  border-top: 1px solid #1f5666;
  background: linear-gradient(90deg, #3b8fa9 0, #4fb9d8 90px);
}

.app {
  width: 60px;
  display: flex;
  align-items: center;
  justify-content: center;
}

.app:first-child { width: 78px; padding-left: 14px; }

.running {
  border: 1px solid #e8fbff;
  outline: 1px solid #2d7488;
  background: linear-gradient(90deg, #8ccfe2, #d3eef5 50%, #8ccfe2);
}

.tray {
  margin-left: auto;
  padding: 0 21px 0 38px;
  display: flex;
  align-items: center;
  gap: 7px;
  color: #fff;
  background: linear-gradient(90deg, #4fb9d8, #388da8 44px);
}

.lang { margin-left: 9px; }
.clock { margin-left: 12px; text-align: center; line-height: 17px; }
```
